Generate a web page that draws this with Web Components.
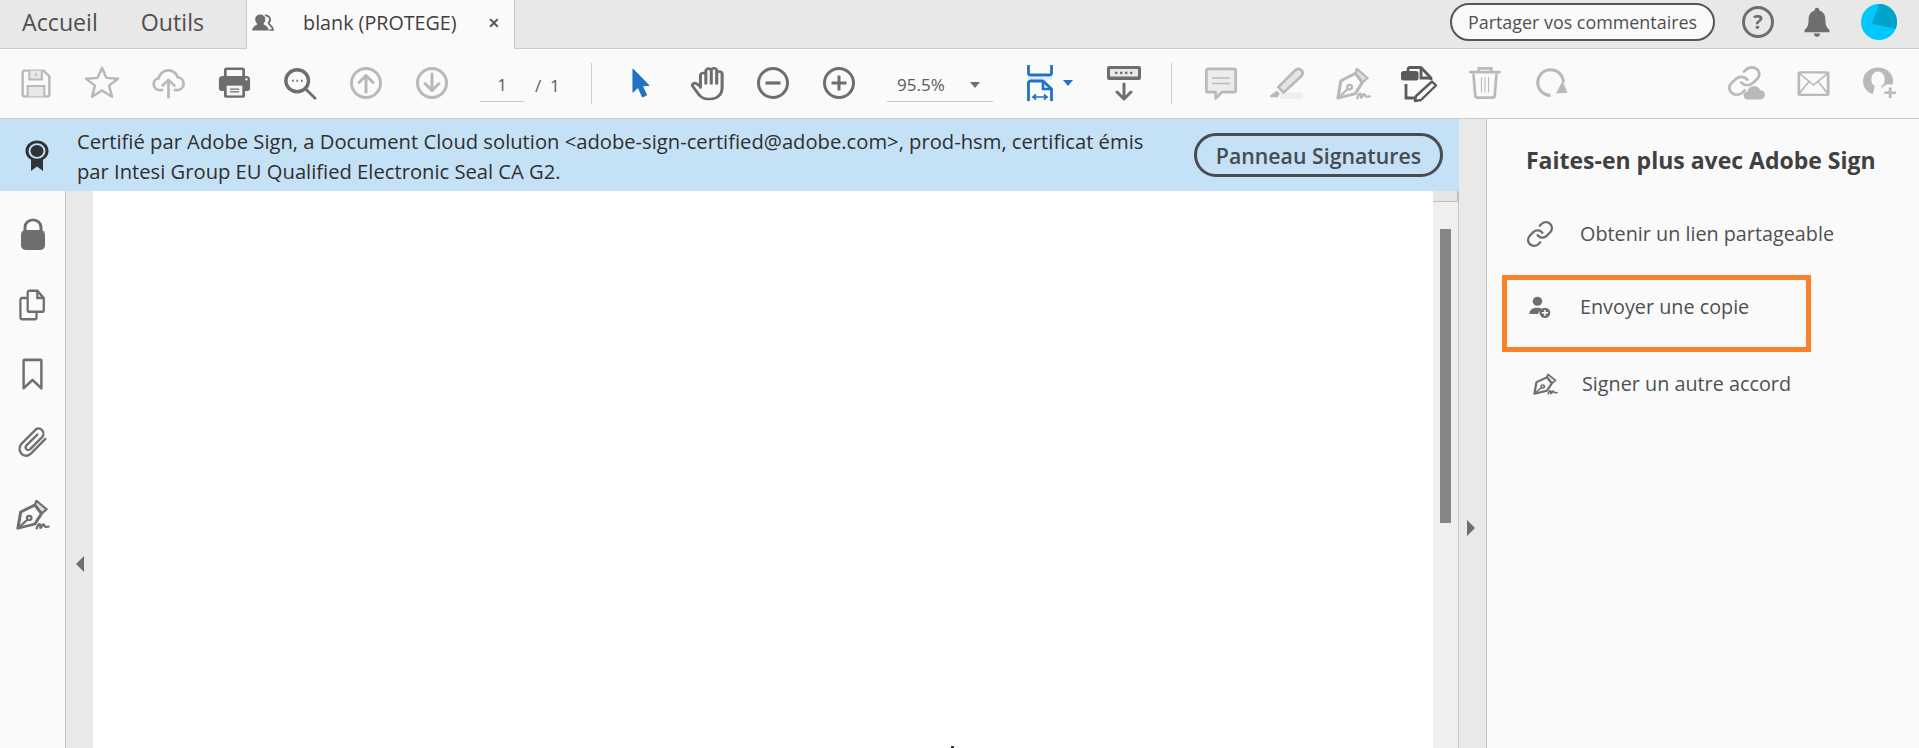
<!DOCTYPE html>
<html lang="fr">
<head>
<meta charset="utf-8">
<title>blank (PROTEGE)</title>
<style>
    html, body { margin: 0; height: 100%; overflow: hidden; }
    body { font-family: "Open Sans", "Noto Sans", sans-serif; color: #505050; }
</style>
</head>
<body>
<acro-app></acro-app>

<template id="app-template">
    <tab-bar></tab-bar>
    <tool-bar></tool-bar>
    <div class="main">
        <div class="left">
            <cert-banner></cert-banner>
            <doc-view></doc-view>
        </div>
        <div class="gutter"><i></i></div>
        <sign-panel></sign-panel>
    </div>
</template>

<script>
/* ICONOS */
const GREY = '#6e6e6e';
const OFF = '#b9b9b9';
const BLUE = '#1f73c4';
const PEN = `
    <path d="M20 7 21.500 2 32.500 12 27 17Z" fill="#dedede" stroke-width="2.4" stroke-linejoin="round"/>
    <path d="M2 34 5 15 20 7 27 17 20 29Z" stroke-width="3.2" stroke-linejoin="round"/>
    <path d="M2 34 12 24" stroke-width="2.4"/><circle cx="14" cy="22" r="2.4" stroke-width="2.4"/>
    <path d="M22 34c1-4 2.500-6 3.500-4s-.5 4.500 1 3 1.500-4.500 3-3 .5 3.500 5 2" stroke-width="2.6" stroke-linecap="round"/>`;
const LINK = `
    <g transform="scale(1.5)" stroke-width="1.9" stroke-linecap="round">
        <path d="M10 13a5 5 0 0 0 7.540.54l3-3a5 5 0 0 0-7.070-7.070l-1.720 1.710"/>
        <path d="M14 11a5 5 0 0 0-7.540-.54l-3 3a5 5 0 0 0 7.070 7.070l1.710-1.710"/>
    </g>`;
const ICONS = {
    save: `<path d="M2 4a2 2 0 0 1 2-2h23l7 7v23a2 2 0 0 1-2 2H4a2 2 0 0 1-2-2Z" stroke-width="3" stroke-linejoin="round"/>
        <path d="M10 2v11h15V2" fill="#e8e8e8" stroke-width="2.4"/><path d="M18 5v4" stroke-width="2"/><path d="M8 34V21h20v13" fill="#e8e8e8" stroke-width="2.4"/>`,
    star: `<polygon points="18,2 22.4,12.6 34,13.4 25.1,20.8 28,32.5 18,26 8,32.5 10.9,20.8 2,13.4 13.6,12.6" stroke-width="2.6" stroke-linejoin="round"/>`,
    cloud: `<path d="M11 26H8.500a6.800 6.800 0 0 1-1-13.500A10.500 10.500 0 0 1 28 11.500 7.300 7.300 0 0 1 28 26h-3" stroke-width="3" stroke-linecap="round"/>
        <path d="M18 34V15M11.500 21l6.500-6.500 6.500 6.500" stroke-width="3" stroke-linecap="round" stroke-linejoin="round"/>`,
    print: `<path d="M8 11V3.500a1.500 1.500 0 0 1 1.500-1.500h17a1.500 1.500 0 0 1 1.500 1.500V11" stroke-width="3"/>
        <path d="M5 10h26a4 4 0 0 1 4 4v10a3 3 0 0 1-3 3H4a3 3 0 0 1-3-3V14a4 4 0 0 1 4-4Z" fill="currentColor" stroke="none"/>
        <rect x="6.500" y="19" width="23" height="15.500" rx="2" fill="currentColor" stroke="none"/>
        <rect x="9.500" y="21" width="17" height="11" fill="#f6f6f6" stroke="none"/><path d="M13 25h10M13 28h10" stroke-width="1.400"/>
        <circle cx="31" cy="14" r="1.300" fill="#fff" stroke="none"/>`,
    search: `<circle cx="15" cy="15" r="12" stroke-width="3.6"/><path d="M24 24 34 34" stroke-width="3" stroke-linecap="round"/>
        <path d="M9.500 15h1.800M14.200 15h1.800M19 15h1.800" stroke-width="2"/>`,
    up: `<circle cx="18" cy="18" r="14.500" stroke-width="3"/><path d="M18 27V10.500M11 17.500l7-7 7 7" stroke-width="3" stroke-linecap="round" stroke-linejoin="round"/>`,
    down: `<circle cx="18" cy="18" r="14.500" stroke-width="3"/><path d="M18 9v16.500M11 18.500l7 7 7-7" stroke-width="3" stroke-linecap="round" stroke-linejoin="round"/>`,
    cursor: `<path d="M1 1 18 18 11 18.500 15.500 28 11 30 6.500 20 1 25Z" fill="currentColor" stroke="currentColor" stroke-width="1" stroke-linejoin="round"/>`,
    hand: `<path d="M8 22V9.500a2.300 2.300 0 0 1 4.600 0V18M12.600 18V5a2.300 2.300 0 0 1 4.600 0v13M17.200 18V4.500a2.300 2.300 0 0 1 4.600 0V18M21.800 18V8a2.300 2.300 0 0 1 4.600 0v14c0 7-4 12-10 12h-2c-4 0-6-2-8-5L1.500 21c-1.200-2.500 1.500-4.500 3.500-2.500L8 21" stroke-width="2.6" stroke-linecap="round" stroke-linejoin="round"/>`,
    minus: `<circle cx="18" cy="18" r="14.500" stroke-width="3"/><path d="M10.500 18h15" stroke-width="3.2"/>`,
    plus: `<circle cx="18" cy="18" r="14.500" stroke-width="3"/><path d="M10.500 18h15M18 10.500v15" stroke-width="3"/>`,
    fit: `<path d="M1.500 0v8a2 2 0 0 0 2 2h19a2 2 0 0 0 2-2V0" stroke-width="2.8"/><path d="M1 13.500h24" stroke="#d3e5f5" stroke-width="2"/>
        <path d="M1.500 36V18a2 2 0 0 1 2-2h12.500l8.500 8v12" stroke-width="2.8" stroke-linejoin="round"/><path d="M16 16v8h8.500" stroke-width="2.6"/>
        <path d="M6 32h14M9 29.500 6 32l3 2.500M17 29.500l3 2.500-3 2.500" stroke-width="1.700"/>`,
    keys: `<rect x="1" y="1" width="34" height="14" rx="2" fill="currentColor" stroke="none"/><rect x="4" y="4" width="28" height="7.500" fill="#e8e8e8" stroke="none"/>
        <path d="M9 7.800h2.400M14 7.800h2.400M19 7.800h2.400M24 7.800h2.400" stroke-width="2.2"/><path d="M18 19v15M11 27l7 7 7-7" stroke-width="3" stroke-linecap="round" stroke-linejoin="round"/>`,
    comment: `<path d="M3.500 2h29a2 2 0 0 1 2 2v21.500a2 2 0 0 1-2 2H19l-7 7v-7H3.500a2 2 0 0 1-2-2V4a2 2 0 0 1 2-2Z" fill="#ececec" stroke-width="3" stroke-linejoin="round"/>
        <path d="M8 12h20M8 18h20" stroke-width="1.6"/>`,
    marker: `<rect x="11" y="28" width="23" height="7" fill="#efefef" stroke="none"/>
        <path d="M26 3.500a4.500 4.500 0 0 1 7 5.500L14 28 8.500 22Z" fill="#e5e5e5" stroke-width="2.8" stroke-linejoin="round"/>
        <path d="M0 31 7 26 10 29 8 33H0Z" fill="currentColor" stroke="none"/>`,
    pen: PEN,
    docedit: `<rect x="0" y="6" width="17.500" height="9.500" rx="2.500" fill="currentColor" stroke="none"/>
        <path d="M7 6V4.500a2 2 0 0 1 2-2h11l10 10.500v2" stroke-width="2.8" stroke-linejoin="round"/><path d="M20 2.500v10.500h10" stroke-width="2.8"/>
        <path d="M5 19v14h9" stroke-width="2.8"/><path d="M31 16.500l4 4L20 35l-6 1 1-5Z" stroke-width="2.4" stroke-linejoin="round"/>`,
    trash: `<path d="M11 6V2.500h14V6M1.500 6.500h33" stroke-width="3" stroke-linecap="round"/><path d="M5 8 7 31a2.500 2.500 0 0 0 2.500 2.500h17A2.500 2.500 0 0 0 29 31L31 8" stroke-width="3"/>
        <path d="M14 12v16M18 12v16M22 12v16" stroke-width="1.200"/>`,
    redo: `<path d="M17 31A14 14 0 1 1 31 17" stroke-width="3.4"/><polygon points="23,29 35.500,28 30,15" fill="currentColor" stroke="none"/>`,
    linkcloud: `<g transform="scale(.92)">${LINK}</g><path d="M20 35a4 4 0 0 1-.500-8 6 6 0 0 1 11.500-1.500A4.800 4.800 0 0 1 31.500 35Z" fill="currentColor" stroke="none"/>`,
    link: LINK,
    mail: `<rect x="2" y="3" width="32" height="30" rx="1.500" stroke-width="3"/><path d="M2 4 18 20 34 4M2 32 13 15.500M34 32 23 15.500" stroke-width="1.900"/>`,
    useradd: `<circle cx="15.500" cy="16" r="15.500" fill="currentColor" stroke="none"/><ellipse cx="15.500" cy="14" rx="7" ry="9" fill="#fafafa" stroke="none"/>
        <path d="M12 22 9 35H24L19 22Z" fill="#fafafa" stroke="none"/><circle cx="27" cy="28" r="8.500" fill="#fafafa" stroke="none"/>
        <path d="M28 23v12M22 29h12" stroke-width="3"/>`,
    people: `<path d="M14 3a5.500 5.500 0 0 1 4 9.500c0 2 4 3 5 9H19" stroke-width="2"/><path d="M9 2a5.500 5.500 0 0 1 5.500 6c0 3-1.500 5-2 6 0 1 5 2 6 8H0c1-6 6-7 6-8-1-1-2.500-3-2.500-6A5.500 5.500 0 0 1 9 2Z" fill="currentColor" stroke="none"/>`,
    bell: `<path d="M18 2a2.500 2.500 0 0 1 2.500 3C26 6.500 27.500 11 27.500 16c0 6 1.500 8 4.500 11v2.500H4V27c3-3 4.500-5 4.500-11 0-5 1.500-9.500 7-11A2.500 2.500 0 0 1 18 2Z" fill="currentColor" stroke="none"/><path d="M14.500 31h7a3.500 3.500 0 0 1-7 0Z" fill="currentColor" stroke="none"/>`,
    seal: `<path d="M9 21v14l6-5 6 5V21" fill="currentColor" stroke="none"/><circle cx="15" cy="13" r="10" fill="#c5e1f6" stroke="currentColor" stroke-width="3"/><circle cx="15" cy="13" r="6.500" fill="currentColor" stroke="none"/>`,
    lock: `<path d="M8 15V10a8 8 0 0 1 16 0v5" stroke-width="3"/><rect x="4" y="13" width="24" height="22" rx="5" fill="currentColor" stroke="none"/>`,
    pages: `<path d="M14 3h10l8 8v13a2 2 0 0 1-2 2H14a2 2 0 0 1-2-2V5a2 2 0 0 1 2-2Z" stroke-width="2.8" stroke-linejoin="round"/><path d="M24 3v8h8" stroke-width="2.8"/>
        <path d="M11 11H5a2 2 0 0 0-2 2v19a2 2 0 0 0 2 2h16a2 2 0 0 0 2-2v-5" stroke-width="2.8"/>`,
    mark: `<path d="M7 2h20a1 1 0 0 1 1 1v30l-11-9-11 9V3a1 1 0 0 1 1-1Z" stroke-width="3" stroke-linejoin="round"/>`,
    clip: `<path d="M34 15 16 32A7.500 7.500 0 0 1 4 21L21 5A6 6 0 0 1 30 13L15 27A2.800 2.800 0 0 1 10.500 22.500L24 10" stroke-width="2.8" stroke-linecap="round" stroke-linejoin="round"/>`,
    usercirc: `<circle cx="14" cy="8" r="7" fill="currentColor" stroke="none"/><path d="M2 28c0-7 5-10 12-10 3 0 5 .5 7 2l-2 3c-3 1-4 3-4 5Z" fill="currentColor" stroke="none"/><circle cx="25" cy="26" r="8" fill="currentColor" stroke="none"/><path d="M25 21.500v9M20.500 26h9" stroke="#fff" stroke-width="2.2"/>`
};

/* COMPONENTE UI ICON */
class UiIcon extends HTMLElement {
    constructor() {
        super();
        this.attachShadow({mode: 'open'});
    }
    render() {
        const w = this.getAttribute('w') || 36;
        const h = this.getAttribute('h') || w;
        const color = this.getAttribute('color') || GREY;
        const box = this.getAttribute('box') || '0 0 36 36';
        this.shadowRoot.innerHTML = `
        <style>
            :host { display: inline-flex; flex: none; width: ${w}px; height: ${h}px; color: ${color}; }
            svg { width: 100%; height: 100%; overflow: visible; }
        </style>
        <svg viewBox="${box}" preserveAspectRatio="none" fill="none" stroke="currentColor">${ICONS[this.getAttribute('name')] || ''}</svg>`;
    }
    connectedCallback() {
        this.render();
    }
}
customElements.define('ui-icon', UiIcon);

/* COMPONENTE TOOL BTN */
class ToolBtn extends HTMLElement {
    constructor() {
        super();
        this.attachShadow({mode: 'open'});
        this.shadowRoot.innerHTML = `
        <style>
            :host { display: flex; flex: none; align-items: center; justify-content: center; width: 66px; height: 68px; }
        </style>
        <slot></slot>`;
    }
}
customElements.define('tool-btn', ToolBtn);

/* COMPONENTE TAB BAR */
class TabBar extends HTMLElement {
    constructor() {
        super();
        this.attachShadow({mode: 'open'});
    }
    render() {
        this.shadowRoot.innerHTML = `
        <style>
            :host {
                display: flex; align-items: center; flex: none; box-sizing: border-box;
                height: 49px; padding: 0 0 5px 22px; background: #e8e8e8;
                border-bottom: 1px solid #cbcbcb; color: #4f4f4f;
            }
            .link { font-size: 23.2px; }
            .outils { margin-left: 43px; }
            .tab {
                display: flex; align-items: center; box-sizing: border-box; align-self: flex-start;
                width: 269px; height: 49px; margin: 0 0 -6px 42px; padding: 0 0 5px 5px;
                background: #fafafa; border: 1px solid #cbcbcb; border-width: 0 1px;
                font-size: 19.7px;
            }
            .name { margin-left: 29px; color: #404040; white-space: nowrap; }
            .close { margin-left: 31px; font-size: 14px; font-weight: 700; color: #555; }
            .right { display: flex; align-items: center; margin-left: auto; }
            .share {
                display: flex; align-items: center; justify-content: center; box-sizing: border-box;
                width: 265px; height: 38px; background: #fafafa; border: 2px solid #555; border-radius: 19px;
                font-size: 17.9px; color: #505050;
            }
            .help {
                display: flex; align-items: center; justify-content: center; box-sizing: border-box;
                width: 32px; height: 32px; margin-left: 27px; border: 3px solid #6e6e6e; border-radius: 50%;
                font-size: 20px; font-weight: 700; color: #6e6e6e;
            }
            .bell { margin-left: 27px; }
            .avatar {
                width: 36px; height: 36px; margin: 0 22px 0 28px; border-radius: 50%; overflow: hidden;
                background: #00c8fa;
            }
            .avatar svg { display: block; }
        </style>
        <span class="link">Accueil</span>
        <span class="link outils">Outils</span>
        <div class="tab">
            <ui-icon name="people" w="22" h="19" box="0 0 24 24"></ui-icon>
            <span class="name">blank (PROTEGE)</span>
            <span class="close">✕</span>
        </div>
        <div class="right">
            <div class="share">Partager vos commentaires</div>
            <div class="help">?</div>
            <ui-icon class="bell" name="bell" w="32" h="32"></ui-icon>
            <div class="avatar"><svg viewBox="0 0 36 36" width="36" height="36"><path d="M18 0H36V25L11 20Z" fill="#00a3c9"/></svg></div>
        </div>`;
    }
    connectedCallback() {
        this.render();
    }
}
customElements.define('tab-bar', TabBar);

/* COMPONENTE TOOL BAR */
class ToolBar extends HTMLElement {
    constructor() {
        super();
        this.attachShadow({mode: 'open'});
    }
    btn(name, color, w, h, box) {
        return `<tool-btn><ui-icon name="${name}" color="${color}" w="${w}" h="${h}"${box ? ` box="${box}"` : ''}></ui-icon></tool-btn>`;
    }
    render() {
        this.shadowRoot.innerHTML = `
        <style>
            :host {
                display: flex; align-items: center; flex: none; box-sizing: border-box;
                height: 70px; padding: 0 0 1px 3px; background: #fafafa; border-bottom: 1px solid #cbcbcb;
                font-size: 17px; color: #5a5a5a;
            }
            .sep { flex: none; width: 1px; height: 41px; background: #cfcfcf; }
            .field { display: flex; align-items: center; box-sizing: border-box; height: 34px; border-bottom: 1px solid #c9c9c9; margin-top: 4px; }
            .page { justify-content: center; width: 44px; margin-left: 15px; }
            .total { width: 35px; margin-left: 11px; margin-top: 4px; }
            .sep1 { margin-left: 21px; margin-right: 16px; }
            .zoom { width: 106px; margin-left: 15px; padding-left: 10px; }
            .caret { width: 0; height: 0; border: 5.5px solid transparent; border-top: 6px solid #6e6e6e; border-bottom: 0; margin-left: 25px; }
            .fit { margin-left: 34px; }
            .blue { flex: none; width: 0; height: 0; border: 5.5px solid transparent; border-top: 6px solid ${BLUE}; border-bottom: 0; margin: 0 0 0 10px; }
            .keys { width: auto; margin-left: 33px; }
            .sep2 { margin-left: 29px; margin-right: 16px; }
            .push { flex: 1; }
            .end { width: 7px; }
        </style>
        ${this.btn('save', OFF, 30, 29)}
        ${this.btn('star', OFF, 36, 34)}
        ${this.btn('cloud', OFF, 33, 32)}
        ${this.btn('print', GREY, 33, 32)}
        ${this.btn('search', GREY, 34, 33)}
        ${this.btn('up', OFF, 36, 36)}
        ${this.btn('down', OFF, 36, 36)}
        <div class="field page">1</div>
        <div class="total">/ &nbsp;1</div>
        <div class="sep sep1"></div>
        ${this.btn('cursor', BLUE, 18, 30, '0 0 19 31')}
        ${this.btn('hand', GREY, 33, 35, '0 0 28 36')}
        ${this.btn('minus', GREY, 36, 36)}
        ${this.btn('plus', GREY, 36, 36)}
        <div class="field zoom">95.5%<span class="caret"></span></div>
        <ui-icon class="fit" name="fit" color="${BLUE}" w="26" h="36" box="0 0 26 36"></ui-icon>
        <span class="blue"></span>
        <tool-btn class="keys"><ui-icon name="keys" w="36" h="36"></ui-icon></tool-btn>
        <div class="sep sep2"></div>
        ${this.btn('comment', OFF, 32, 33)}
        ${this.btn('marker', OFF, 35, 33)}
        ${this.btn('pen', OFF, 35, 33)}
        ${this.btn('docedit', '#5a5a5a', 36, 36)}
        ${this.btn('trash', OFF, 32, 34)}
        ${this.btn('redo', OFF, 33, 33)}
        <div class="push"></div>
        ${this.btn('linkcloud', OFF, 36, 33, '2.5 2.5 33 33')}
        ${this.btn('mail', OFF, 33, 27)}
        ${this.btn('useradd', OFF, 33, 32, '0 0 34 36')}
        <div class="end"></div>`;
    }
    connectedCallback() {
        this.render();
    }
}
customElements.define('tool-bar', ToolBar);

/* COMPONENTE CERT BANNER */
class CertBanner extends HTMLElement {
    constructor() {
        super();
        this.attachShadow({mode: 'open'});
    }
    render() {
        this.shadowRoot.innerHTML = `
        <style>
            :host {
                display: flex; align-items: center; flex: none; height: 72px;
                background: #c5e1f6; color: #2f2f2f; font-size: 20.2px; line-height: 30px;
            }
            ui-icon { margin-left: 22px; }
            p { flex: none; width: 1090px; margin: 0 0 0 25px; padding-top: 1px; }
            button {
                display: block; box-sizing: border-box; width: 249px; height: 44px; margin-left: 27px; padding: 0;
                background: transparent; border: 3px solid #474c52; border-radius: 22px;
                font: 600 21.3px "Open Sans", "Noto Sans", sans-serif; color: #474c52; white-space: nowrap;
            }
        </style>
        <ui-icon name="seal" color="#2f3338" w="30" h="33" box="0 0 30 36"></ui-icon>
        <p>Certifié par Adobe Sign, a Document Cloud solution &lt;adobe-sign-certified@adobe.com&gt;, prod-hsm, certificat émis par Intesi Group EU Qualified Electronic Seal CA G2.</p>
        <button>Panneau Signatures</button>`;
    }
    connectedCallback() {
        this.render();
    }
}
customElements.define('cert-banner', CertBanner);

/* COMPONENTE DOC VIEW */
class DocView extends HTMLElement {
    constructor() {
        super();
        this.attachShadow({mode: 'open'});
    }
    render() {
        this.shadowRoot.innerHTML = `
        <style>
            :host { display: flex; flex: 1; min-height: 0; }
            .rail {
                display: flex; flex-direction: column; align-items: center; flex: none; box-sizing: border-box;
                width: 66px; padding-top: 27px; background: #fafafa; border-right: 1px solid #c6c6c6;
            }
            .rail ui-icon { margin-bottom: 37px; }
            .rail .m35 { margin-bottom: 35px; }
            .rail .m42 { margin-bottom: 42px; }
            .fold { display: flex; align-items: center; justify-content: center; flex: none; width: 27px; background: #e9e9e9; padding-top: 189px; box-sizing: border-box; height: 557px; }
            .fold i { width: 0; height: 0; border: 8px solid transparent; border-right: 8px solid #6e6e6e; border-left: 0; }
            .page { flex: 1; position: relative; background: #fff; }
            .speck { position: absolute; left: 858px; bottom: 0; width: 3px; height: 2px; background: #333; }
            .bar { flex: none; box-sizing: border-box; width: 26px; background: #efefef; border-right: 1px solid #c6c6c6; }
            .corner { box-sizing: border-box; height: 11px; background: #e6e6e6; border: 1px solid #bdbdbd; border-width: 0 1px 1px 0; }
            .thumb { width: 11px; height: 294px; margin: 27px 0 0 7px; background: #858585; }
        </style>
        <div class="rail">
            <ui-icon name="lock" w="26" h="33" box="3 0 26 36"></ui-icon>
            <ui-icon name="pages" w="29" h="33"></ui-icon>
            <ui-icon class="m35" name="mark" w="21" h="33" box="4 0 26 36"></ui-icon>
            <ui-icon class="m42" name="clip" w="29" h="31"></ui-icon>
            <ui-icon name="pen" w="34" h="31"></ui-icon>
        </div>
        <div class="fold"><i></i></div>
        <div class="page"><span class="speck"></span></div>
        <div class="bar"><div class="corner"></div><div class="thumb"></div></div>`;
    }
    connectedCallback() {
        this.render();
    }
}
customElements.define('doc-view', DocView);

/* COMPONENTE PANEL ITEM */
class PanelItem extends HTMLElement {
    constructor() {
        super();
        this.attachShadow({mode: 'open'});
        this.shadowRoot.innerHTML = `
        <style>
            :host {
                display: flex; box-sizing: border-box; width: 309px; height: var(--Item-Height, 77px);
                padding: var(--Item-Top, 17px) 0 0 26px; font-size: 19.8px; line-height: 30px; color: #505050;
                white-space: nowrap;
            }
            :host([boxed]) { border: 5px solid #f9812a; padding: 12px 0 0 21px; }
            .icon { display: flex; align-items: center; flex: none; width: var(--Item-Icon, 52px); height: 30px; }
        </style>
        <div class="icon"><slot name="icon"></slot></div>
        <slot></slot>`;
    }
}
customElements.define('panel-item', PanelItem);

/* COMPONENTE SIGN PANEL */
class SignPanel extends HTMLElement {
    constructor() {
        super();
        this.attachShadow({mode: 'open'});
    }
    render() {
        this.shadowRoot.innerHTML = `
        <style>
            :host { display: block; flex: 1; padding-left: 15px; background: #fafafa; }
            h2 { margin: 26px 0 30px 24px; font-size: 23px; line-height: 30px; font-weight: 700; color: #404040; white-space: nowrap; }
        </style>
        <h2>Faites-en plus avec Adobe Sign</h2>
        <panel-item style="--Item-Height:70px;--Item-Top:14px">
            <ui-icon slot="icon" name="link" w="24" h="24" box="3 3 30 30"></ui-icon>Obtenir un lien partageable
        </panel-item>
        <panel-item boxed>
            <ui-icon slot="icon" name="usercirc" w="23" h="22" box="0 0 34 34"></ui-icon>Envoyer une copie
        </panel-item>
        <panel-item style="--Item-Icon:54px">
            <ui-icon slot="icon" name="pen" w="25" h="22" style="margin-left:5px"></ui-icon>Signer un autre accord
        </panel-item>`;
    }
    connectedCallback() {
        this.render();
    }
}
customElements.define('sign-panel', SignPanel);

/* COMPONENTE ACRO APP */
class AcroApp extends HTMLElement {
    constructor() {
        super();
        this.attachShadow({mode: 'open'});
    }
    getStyles() {
        const style = document.createElement('style');
        style.textContent = `
            :host { display: flex; flex-direction: column; height: 100vh; overflow: hidden; }
            .main { display: flex; flex: 1; min-height: 0; }
            .left { display: flex; flex-direction: column; flex: none; width: 1459px; }
            .gutter { display: flex; flex: none; justify-content: center; box-sizing: border-box; width: 28px; background: #e9e9e9; border-right: 1px solid #c6c6c6; padding: 401px 3px 0 0; }
            .gutter i { width: 0; height: 0; border: 8px solid transparent; border-left: 8px solid #6e6e6e; border-right: 0; }
        `;
        return style;
    }
    render() {
        this.shadowRoot.appendChild(this.getStyles());
        this.shadowRoot.appendChild(document.getElementById('app-template').content.cloneNode(true));
    }
    connectedCallback() {
        this.render();
    }
}
customElements.define('acro-app', AcroApp);
</script>
</body>
</html>
